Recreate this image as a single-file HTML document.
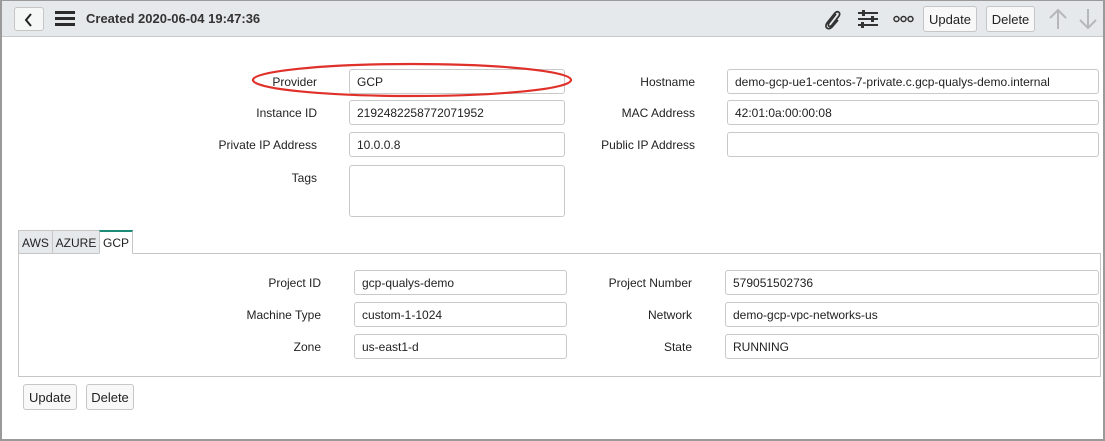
<!DOCTYPE html>
<html><head><style>
*{box-sizing:border-box;margin:0;padding:0}
body{width:1105px;height:441px;background:#fff;font-family:"Liberation Sans",sans-serif;font-size:12px;color:#222;position:relative;overflow:hidden}
.frame{position:absolute;left:0;top:0;width:1105px;height:441px;border:2px solid #9a9a9a;border-top:1px solid #9a9a9a}
.hdr{position:absolute;left:2px;top:1px;width:1101px;height:36px;background:#e6e9eb;border-bottom:1px solid #c8cbcd}
.btn{position:absolute;background:#f8f8f8;border:1px solid #c6c6c6;border-radius:3px;font-size:13px;text-align:center;line-height:23px;color:#222}
.lbl{position:absolute;text-align:right;font-size:12px;line-height:27px}
.inp{position:absolute;border:1px solid #c9c9c9;border-radius:3px;height:25px;line-height:25px;padding-left:7px;font-size:12px;background:#fff}
.tab{position:absolute;top:230px;height:24px;line-height:25px;font-size:12px;text-align:center;background:#e6e9eb;border:1px solid #c6c6c6}
</style></head><body>
<div class="hdr"></div>
<div class="btn" style="left:14px;top:7px;width:30px;height:24px;background:#f5f6f6"><svg width="12" height="14" viewBox="0 0 12 14" style="margin-top:5px"><path d="M8 1 L3 7 L8 13" stroke="#222" stroke-width="2" fill="none"/></svg></div>
<div style="position:absolute;left:55px;top:11px;width:20px;height:3px;background:#2b2b2b;box-shadow:0 6px 0 #2b2b2b,0 12px 0 #2b2b2b"></div>
<div style="position:absolute;left:86px;top:11px;font-weight:bold;font-size:13px;color:#333">Created 2020-06-04 19:47:36</div>
<svg style="position:absolute;left:822px;top:8px" width="20" height="22" viewBox="0 0 20 22"><path d="M14 6 L7 15 C5 18 8 20 10 17 L17 8 C19 5 16 2 13 5 L5 15 C2 19 6 23 10 19 L16 12" stroke="#333" stroke-width="1.8" fill="none"/></svg>
<svg style="position:absolute;left:857px;top:10px" width="22" height="18" viewBox="0 0 22 18"><path d="M1 3H21M1 9H21M1 15H21" stroke="#333" stroke-width="2"/><rect x="5" y="0" width="3" height="6" fill="#333"/><rect x="14" y="6" width="3" height="6" fill="#333"/><rect x="4" y="12" width="3" height="6" fill="#333"/></svg>
<svg style="position:absolute;left:893px;top:15px" width="22" height="8" viewBox="0 0 22 8"><circle cx="3.5" cy="4" r="2.5" stroke="#333" stroke-width="1.5" fill="none"/><circle cx="10.5" cy="4" r="2.5" stroke="#333" stroke-width="1.5" fill="none"/><circle cx="17.5" cy="4" r="2.5" stroke="#333" stroke-width="1.5" fill="none"/></svg>
<div class="btn" style="left:923px;top:6px;width:54px;height:26px;line-height:25px">Update</div>
<div class="btn" style="left:986px;top:6px;width:49px;height:26px;line-height:25px">Delete</div>
<svg style="position:absolute;left:1048px;top:8px" width="20" height="22" viewBox="0 0 20 22"><path d="M10 21V2M2 10L10 2L18 10" stroke="#b5b7b9" stroke-width="2" fill="none"/></svg>
<svg style="position:absolute;left:1078px;top:8px" width="20" height="22" viewBox="0 0 20 22"><path d="M10 1V20M2 12L10 20L18 12" stroke="#b5b7b9" stroke-width="2" fill="none"/></svg>

<div class="lbl" style="left:150px;width:167px;top:69px">Provider</div>
<div class="inp" style="left:349px;top:69px;width:216px">GCP</div>
<div class="lbl" style="left:150px;width:167px;top:100px">Instance ID</div>
<div class="inp" style="left:349px;top:100px;width:216px">2192482258772071952</div>
<div class="lbl" style="left:150px;width:167px;top:132px">Private IP Address</div>
<div class="inp" style="left:349px;top:132px;width:216px">10.0.0.8</div>
<div class="lbl" style="left:150px;width:167px;top:165px">Tags</div>
<div class="inp" style="left:349px;top:165px;width:216px;height:52px"></div>
<svg style="position:absolute;left:250px;top:61px" width="324" height="38"><ellipse cx="162" cy="19" rx="159" ry="16" stroke="#e0302a" stroke-width="2.2" fill="none"/></svg>

<div class="lbl" style="left:560px;width:135px;top:69px">Hostname</div>
<div class="inp" style="left:727px;top:69px;width:372px">demo-gcp-ue1-centos-7-private.c.gcp-qualys-demo.internal</div>
<div class="lbl" style="left:560px;width:135px;top:100px">MAC Address</div>
<div class="inp" style="left:727px;top:100px;width:372px">42:01:0a:00:00:08</div>
<div class="lbl" style="left:560px;width:135px;top:132px">Public IP Address</div>
<div class="inp" style="left:727px;top:132px;width:372px"></div>

<div style="position:absolute;left:18px;top:253px;width:1083px;height:124px;border:1px solid #c6c6c6"></div>
<div class="tab" style="left:18px;width:35px">AWS</div>
<div class="tab" style="left:52px;width:48px">AZURE</div>
<div class="tab" style="left:99px;width:34px;background:#fff;border-top:2px solid #1e8a78;border-bottom:1px solid #fff;line-height:23px">GCP</div>

<div class="lbl" style="left:150px;width:171px;top:270px">Project ID</div>
<div class="inp" style="left:354px;top:270px;width:213px">gcp-qualys-demo</div>
<div class="lbl" style="left:150px;width:171px;top:302px">Machine Type</div>
<div class="inp" style="left:354px;top:302px;width:213px">custom-1-1024</div>
<div class="lbl" style="left:150px;width:171px;top:334px">Zone</div>
<div class="inp" style="left:354px;top:334px;width:213px">us-east1-d</div>
<div class="lbl" style="left:560px;width:132px;top:270px">Project Number</div>
<div class="inp" style="left:725px;top:270px;width:374px">579051502736</div>
<div class="lbl" style="left:560px;width:132px;top:302px">Network</div>
<div class="inp" style="left:725px;top:302px;width:374px">demo-gcp-vpc-networks-us</div>
<div class="lbl" style="left:560px;width:132px;top:334px">State</div>
<div class="inp" style="left:725px;top:334px;width:374px">RUNNING</div>

<div class="btn" style="left:23px;top:384px;width:54px;height:26px;line-height:25px">Update</div>
<div class="btn" style="left:86px;top:384px;width:48px;height:26px;line-height:25px">Delete</div>
<div class="frame"></div>
</body></html>
